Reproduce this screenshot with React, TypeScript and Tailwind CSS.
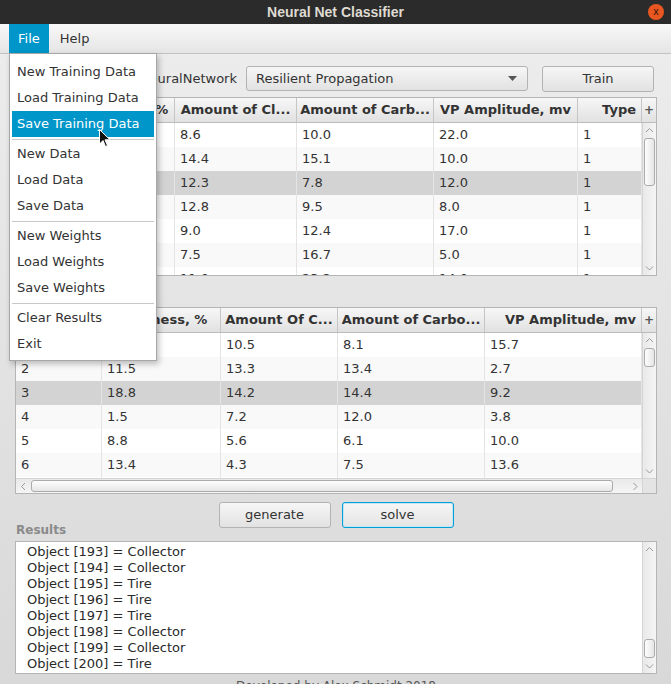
import React from "react";

const menuGroups = [
  ["New Training Data", "Load Training Data", "Save Training Data"],
  ["New Data", "Load Data", "Save Data"],
  ["New Weights", "Load Weights", "Save Weights"],
  ["Clear Results", "Exit"],
];

const topHeaders = ["#", "Shininess, %", "Amount of Cl...", "Amount of Carb...", "VP Amplitude, mv", "Type"];
const topRows = [
  ["1", "12.4", "8.6", "10.0", "22.0", "1"],
  ["2", "9.7", "14.4", "15.1", "10.0", "1"],
  ["3", "15.2", "12.3", "7.8", "12.0", "1"],
  ["4", "6.3", "12.8", "9.5", "8.0", "1"],
  ["5", "11.1", "9.0", "12.4", "17.0", "1"],
  ["6", "8.4", "7.5", "16.7", "5.0", "1"],
  ["7", "13.0", "11.0", "23.2", "14.0", "1"],
];

const bottomHeaders = ["#", "Shininess, %", "Amount Of C...", "Amount of Carbo...", "VP Amplitude, mv"];
const bottomRows = [
  ["1", "4.2", "10.5", "8.1", "15.7"],
  ["2", "11.5", "13.3", "13.4", "2.7"],
  ["3", "18.8", "14.2", "14.4", "9.2"],
  ["4", "1.5", "7.2", "12.0", "3.8"],
  ["5", "8.8", "5.6", "6.1", "10.0"],
  ["6", "13.4", "4.3", "7.5", "13.6"],
  ["7", "7.9", "9.1", "11.2", "6.4"],
];

const results = [
  "Object [193] = Collector",
  "Object [194] = Collector",
  "Object [195] = Tire",
  "Object [196] = Tire",
  "Object [197] = Tire",
  "Object [198] = Collector",
  "Object [199] = Collector",
  "Object [200] = Tire",
];

function Chevron({ dir }: { dir: "up" | "down" | "left" | "right" }) {
  const pts = {
    up: "1,5 4.5,1.5 8,5",
    down: "1,1.5 4.5,5 8,1.5",
    left: "5,1 1.5,4.5 5,8",
    right: "1.5,1 5,4.5 1.5,8",
  }[dir];
  const size = dir === "up" || dir === "down" ? { w: 9, h: 7 } : { w: 7, h: 9 };
  return (
    <svg width={size.w} height={size.h} viewBox={`0 0 ${size.w} ${size.h}`}>
      <polyline points={pts} fill="none" stroke="#9a9a9a" strokeWidth="1" />
    </svg>
  );
}

function VScroll({ thumb }: { thumb: string }) {
  return (
    <div className="w-[14px] self-stretch border-l border-[#d4d4d4] bg-gradient-to-r from-[#e9e9e9] to-[#f5f5f5] flex flex-col items-center">
      <div className="h-[14px] w-full flex items-center justify-center">
        <Chevron dir="up" />
      </div>
      <div className={`w-[11px] rounded-[3px] border border-[#ababab] bg-gradient-to-r from-[#fdfdfd] to-[#e6e6e6] ${thumb}`} />
      <div className="flex-1" />
      <div className="h-[14px] w-full flex items-center justify-center">
        <Chevron dir="down" />
      </div>
    </div>
  );
}

function HeaderCell({ label, end }: { label: string; end?: boolean }) {
  return (
    <div
      className={`h-[24px] flex items-center px-[3px] overflow-hidden whitespace-nowrap font-bold text-[13px] text-[#333] border-r border-[#c6c6c6] ${
        end ? "justify-end pr-[5px]" : "justify-center"
      }`}
    >
      {label}
    </div>
  );
}

function Rows({ rows, grid, selected }: { rows: string[][]; grid: string; selected: number }) {
  return (
    <div className="flex-1 overflow-hidden bg-white">
      {rows.map((r, i) => (
        <div
          key={i}
          className={`grid ${grid} h-[24px] ${
            i === selected ? "bg-[#d3d3d3]" : i % 2 === 1 ? "bg-[#f9f9f9]" : "bg-white"
          }`}
        >
          {r.map((c, j) => (
            <div
              key={j}
              className="pl-[5px] leading-[24px] text-[13px] text-[#333] border-r border-[#e4e4e4] whitespace-nowrap overflow-hidden"
            >
              {c}
            </div>
          ))}
        </div>
      ))}
    </div>
  );
}

function FxButton({ label, width, focused }: { label: string; width: string; focused?: boolean }) {
  return (
    <div
      className={`${width} h-[26px] rounded-[3px] flex items-center justify-center text-[13px] text-[#333] ${
        focused
          ? "border border-[#039ed3] bg-gradient-to-b from-[#f6f6f6] to-[#e4e4e4] shadow-[inset_0_0_0_1px_#bfe7f5]"
          : "border border-[#b3b3b3] bg-gradient-to-b from-[#f6f6f6] to-[#e2e2e2]"
      }`}
    >
      {label}
    </div>
  );
}

export default function App() {
  return (
    <div className="relative w-[671px] h-[684px] overflow-hidden flex flex-col font-['DejaVu_Sans',sans-serif]">
      {/* window title */}
      <div className="shrink-0 h-[24px] bg-[#2b2b2b] grid grid-cols-[1fr_auto_1fr] items-center">
        <div />
        <span className="font-['Liberation_Sans',sans-serif] font-bold text-[14px] text-[#dfdbd2]">
          Neural Net Classifier
        </span>
        <div className="justify-self-end mr-[7px] w-4 h-4 rounded-full bg-[#e9561f] flex items-center justify-center text-[10px] leading-none text-[#3b1a0c]">
          x
        </div>
      </div>

      {/* menu bar */}
      <div className="shrink-0 h-[30px] border-b border-[#c2c2c2] bg-gradient-to-b from-[#f8f8f8] to-[#e5e5e5] flex pl-[9px] text-[13px]">
        <div className="h-[29px] px-[9px] bg-[#0096c9] text-white flex items-center">File</div>
        <div className="h-[29px] px-[11px] flex items-center text-[#333]">Help</div>
      </div>

      {/* main content */}
      <div className="shrink-0 flex-1 flex flex-col pl-[15px] pr-[14px] pt-[12px] bg-gradient-to-b from-[#ececec] to-[#d8d8d8]">
        <div className="shrink-0 h-[25px] flex items-center justify-end pr-[3px]">
          <span className="text-[13px] text-[#333] mr-[9px]">NeuralNetwork</span>
          <div className="w-[282px] h-[25px] rounded-[3px] border border-[#b3b3b3] bg-gradient-to-b from-[#f6f6f6] to-[#e2e2e2] flex items-center justify-between pl-[9px] pr-[10px] text-[13px] text-[#333]">
            <span>Resilient Propagation</span>
            <svg width="9" height="5" viewBox="0 0 9 5">
              <polygon points="0,0 9,0 4.5,5" fill="#555" />
            </svg>
          </div>
          <div className="ml-[14px]">
            <FxButton label="Train" width="w-[112px]" />
          </div>
        </div>

        {/* training table */}
        <div className="shrink-0 mt-[6px] border border-[#b5b5b5] bg-white flex flex-col">
          <div className="grid grid-cols-[54px_105px_122px_137px_144px_64px_14px] border-b border-[#bcbcbc] bg-gradient-to-b from-[#f7f7f7] to-[#e1e1e1]">
            {topHeaders.map((h, i) => (
              <HeaderCell key={h} label={h} end={i === topHeaders.length - 1} />
            ))}
            <div className="h-[24px] flex items-center justify-center text-[12px] font-bold text-[#555]">+</div>
          </div>
          <div className="h-[152px] flex">
            <Rows rows={topRows} grid="grid-cols-[54px_105px_122px_137px_144px_64px]" selected={2} />
            <VScroll thumb="mt-[1px] h-[48px]" />
          </div>
        </div>

        {/* data table */}
        <div className="shrink-0 mt-[31px] border border-[#b5b5b5] bg-white flex flex-col">
          <div className="grid grid-cols-[86px_119px_117px_147px_157px_14px] border-b border-[#bcbcbc] bg-gradient-to-b from-[#f7f7f7] to-[#e1e1e1]">
            {bottomHeaders.map((h, i) => (
              <HeaderCell key={h} label={h} end={i === bottomHeaders.length - 1} />
            ))}
            <div className="h-[24px] flex items-center justify-center text-[12px] font-bold text-[#555]">+</div>
          </div>
          <div className="h-[145px] flex">
            <Rows rows={bottomRows} grid="grid-cols-[86px_119px_117px_147px_157px]" selected={2} />
            <VScroll thumb="mt-[1px] h-[19px]" />
          </div>
          <div className="h-[15px] flex border-t border-[#d4d4d4] bg-gradient-to-b from-[#e9e9e9] to-[#f5f5f5]">
            <div className="w-[14px] flex items-center justify-center">
              <Chevron dir="left" />
            </div>
            <div className="ml-[1px] my-[1px] w-[582px] rounded-[3px] border border-[#ababab] bg-gradient-to-b from-[#fdfdfd] to-[#e6e6e6]" />
            <div className="flex-1" />
            <div className="w-[14px] flex items-center justify-center">
              <Chevron dir="right" />
            </div>
            <div className="w-[14px] bg-[#e4e4e4] border-l border-[#d4d4d4]" />
          </div>
        </div>

        {/* actions + results label */}
        <div className="shrink-0 h-[43px] pt-[8px] grid grid-cols-[1fr_auto_1fr]">
          <span className="self-end text-[12px] leading-[14px] font-bold text-[#8a8a8a] pl-[1px]">Results</span>
          <div className="self-start flex gap-[11px]">
            <FxButton label="generate" width="w-[112px]" />
            <FxButton label="solve" width="w-[112px]" focused />
          </div>
          <div />
        </div>

        {/* results */}
        <div className="shrink-0 mt-[4px] h-[133px] border border-[#b5b5b5] bg-white flex">
          <div className="flex-1 pl-[11px] pt-[2px]">
            {results.map((r, i) => (
              <div key={i} className="text-[13px] leading-[16px] text-[#2a2a2a] whitespace-nowrap">
                {r}
              </div>
            ))}
          </div>
          <VScroll thumb="mt-[83px] h-[19px]" />
        </div>

        <div className="shrink-0 mt-[4px] text-center text-[12px] leading-[16px] text-[#555]">
          Developed by Alex Schmidt 2018
        </div>
      </div>

      {/* open File menu */}
      <div className="absolute left-[9px] top-[53px] w-[148px] border border-[#a7a7a7] bg-white shadow-[2px_3px_6px_rgba(0,0,0,0.25)] pt-[5px] pb-[3px] px-[1px] text-[13px]">
        {menuGroups.map((group, gi) => (
          <div key={gi}>
            {gi > 0 && <div className="mt-[2px] mb-[1px] mx-[1px] h-px bg-[#c8c8c8]" />}
            {group.map((item) => {
              const active = item === "Save Training Data";
              return (
                <div
                  key={item}
                  className={`h-[26px] mx-[1px] pl-[5px] flex items-center whitespace-nowrap ${
                    active ? "bg-[#0096c9] text-white" : "text-[#333]"
                  }`}
                >
                  {item}
                </div>
              );
            })}
          </div>
        ))}
      </div>

      {/* mouse pointer */}
      <svg className="absolute left-[99px] top-[129px]" width="12" height="19" viewBox="0 0 12 19">
        <path d="M0.5 0.5 L0.5 15 L4 11.5 L6.5 17.5 L8.5 16.6 L6 10.8 L11 10.8 Z" fill="#111" stroke="#fff" strokeWidth="1" />
      </svg>
    </div>
  );
}
